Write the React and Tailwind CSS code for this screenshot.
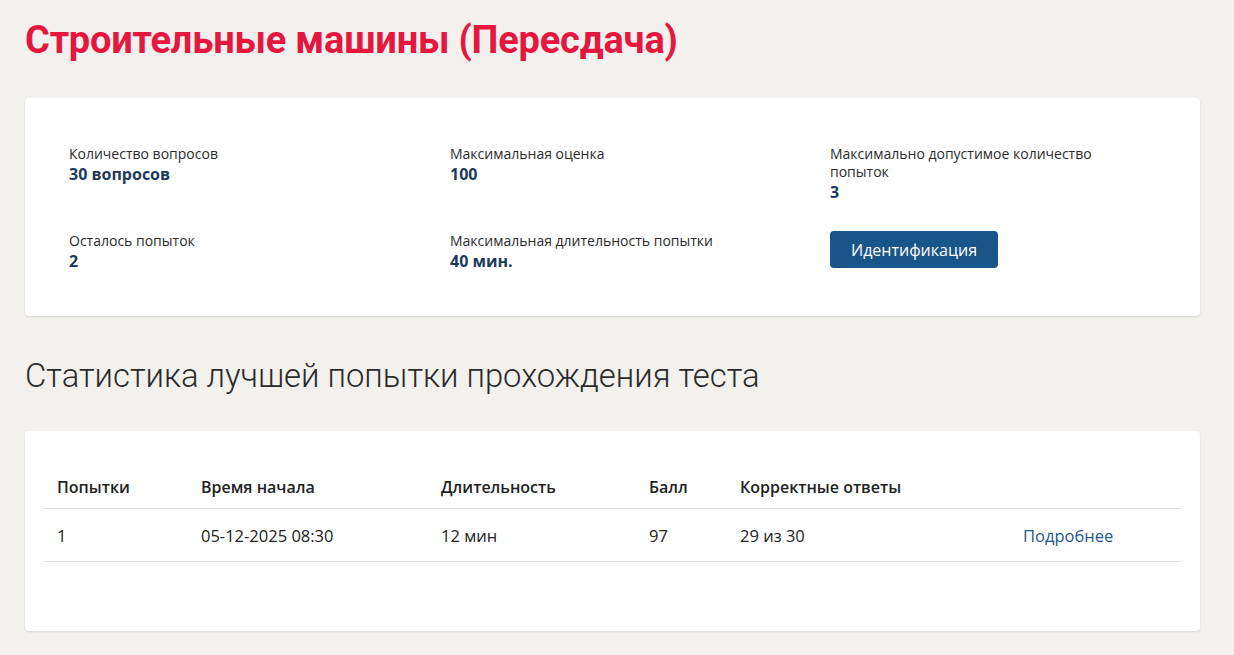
const stats = [
  { label: 'Количество вопросов', value: '30 вопросов' },
  { label: 'Максимальная оценка', value: '100' },
  { label: 'Максимально допустимое количество попыток', value: '3' },
  { label: 'Осталось попыток', value: '2' },
  { label: 'Максимальная длительность попытки', value: '40 мин.' },
];

const columns = [
  { title: 'Попытки', width: 'w-[144px]' },
  { title: 'Время начала', width: 'w-[240px]' },
  { title: 'Длительность', width: 'w-[208px]' },
  { title: 'Балл', width: 'w-[91px]' },
  { title: 'Корректные ответы', width: 'w-[283px]' },
  { title: '', width: '' },
];

const attempts = [
  { n: '1', start: '05-12-2025 08:30', duration: '12 мин', score: '97', correct: '29 из 30' },
];

function Stat({ label, value }) {
  return (
    <div>
      <div className="text-[14px] leading-[18px] text-[#2b2b2b]">{label}</div>
      <div className="text-[16px] leading-[22px] font-bold text-[#1c3a5e]">{value}</div>
    </div>
  );
}

export default function App() {
  return (
    <div className="min-h-[655px] bg-[#f2f1ee] pl-[25px] pr-[34px] pt-[16px] pb-[24px] font-['Open_Sans',sans-serif]">
      <h1 className="font-['Roboto',sans-serif] text-[38px] leading-[48px] font-bold text-[#e5173f] tracking-[-0.2px]">
        Строительные машины (Пересдача)
      </h1>

      <div className="mt-[34px] rounded-[4px] bg-white shadow-[0_1px_2px_rgba(0,0,0,0.12)] pl-[44px] pr-[44px] pt-[47px] pb-[44px]">
        <div className="grid grid-cols-[381px_380px_1fr] gap-y-[29px]">
          <Stat {...stats[0]} />
          <Stat {...stats[1]} />
          <div className="pr-[30px]">
            <Stat {...stats[2]} />
          </div>
          <Stat {...stats[3]} />
          <Stat {...stats[4]} />
          <div className="-mt-px">
            <button className="h-[37px] w-[168px] rounded-[4px] bg-[#1a558a] text-[16px] text-white">
              Идентификация
            </button>
          </div>
        </div>
      </div>

      <h2 className="mt-[40px] font-['Roboto',sans-serif] text-[32.8px] leading-[40px] font-light text-[#2b2b2b]">
        Статистика лучшей попытки прохождения теста
      </h2>

      <div className="mt-[35px] rounded-[4px] bg-white shadow-[0_1px_2px_rgba(0,0,0,0.12)] px-[19px] pt-[28px] pb-[69px]">
        <table className="w-full border-collapse text-[16px] leading-6">
          <thead>
            <tr className="border-b border-[#e2e0dc]">
              {columns.map((c, i) => (
                <th key={i} className={`${c.width} pl-[13px] pt-[16px] pb-[9px] text-left font-semibold text-[#222]`}>
                  {c.title}
                </th>
              ))}
            </tr>
          </thead>
          <tbody>
            {attempts.map((a) => (
              <tr key={a.n} className="border-b border-[#e2e0dc] text-[#222] text-[16.5px]">
                <td className="pl-[13px] pt-[15px] pb-[13px]">{a.n}</td>
                <td className="pl-[13px] pt-[15px] pb-[13px]">{a.start}</td>
                <td className="pl-[13px] pt-[15px] pb-[13px]">{a.duration}</td>
                <td className="pl-[13px] pt-[15px] pb-[13px]">{a.score}</td>
                <td className="pl-[13px] pt-[15px] pb-[13px]">{a.correct}</td>
                <td className="pl-[13px] pt-[15px] pb-[13px]">
                  <a href="#" className="text-[#24578a]">Подробнее</a>
                </td>
              </tr>
            ))}
          </tbody>
        </table>
      </div>
    </div>
  );
}
